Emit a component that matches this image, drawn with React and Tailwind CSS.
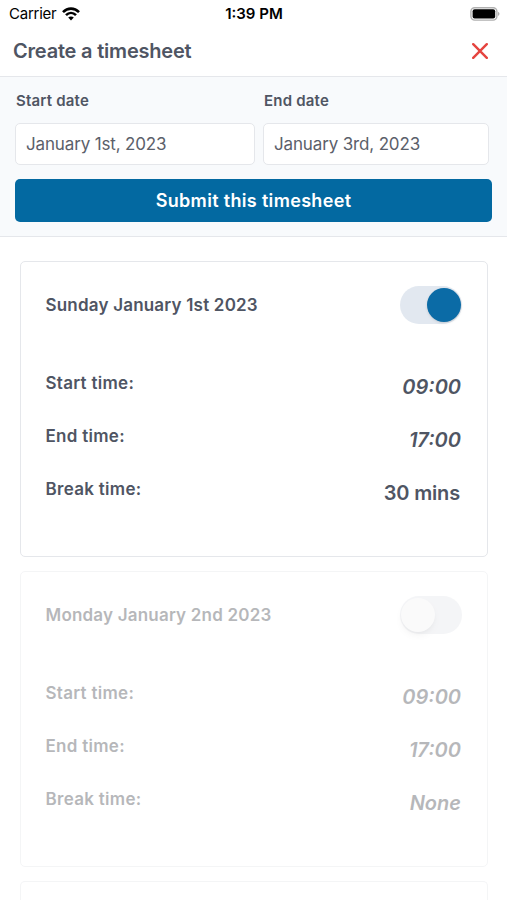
import { clsx } from 'clsx';

const days = [
  { title: 'Sunday January 1st 2023', start: '09:00', end: '17:00', breakTime: '30 mins', enabled: true },
  { title: 'Monday January 2nd 2023', start: '09:00', end: '17:00', breakTime: 'None', enabled: false },
];

function WifiIcon() {
  return (
    <svg className="mb-px ml-[6px] h-[14px] w-[18px]" viewBox="0 0 18 14" fill="none" stroke="#000" strokeWidth="2.6">
      <path d="M1 5.1C5.6 0.4 12.4 0.4 17 5.1" />
      <path d="M4 8.2C6.9 5.3 11.1 5.3 14 8.2" />
      <path d="M9 13.4L6.2 10.5C7.8 9 10.2 9 11.8 10.5Z" fill="#000" stroke="none" />
    </svg>
  );
}

function BatteryIcon() {
  return (
    <svg className="mb-px h-[14px] w-[30px]" viewBox="0 0 30 14">
      <rect x="0.9" y="0.7" width="26" height="12.4" rx="3.8" fill="none" stroke="#b0b0b0" strokeWidth="1.4" />
      <rect x="2.6" y="2.3" width="22.6" height="9.2" rx="2" fill="#000" />
      <path d="M28 4.8C30 5.6 30 8.2 28 9Z" fill="#b0b0b0" />
    </svg>
  );
}

function StatusBar() {
  return (
    <div className="grid h-7 grid-cols-3 items-center pr-[7px] pl-[9px] text-[15px] text-black">
      <div className="flex items-center">
        <span className="tracking-[-0.25px]">Carrier</span>
        <WifiIcon />
      </div>
      <span className="pr-px text-center font-semibold">1:39 PM</span>
      <div className="flex justify-end">
        <BatteryIcon />
      </div>
    </div>
  );
}

function DateField({ label, value, className }) {
  return (
    <div className={className}>
      <label className="block pl-px text-[15px] leading-5 font-semibold tracking-[0.2px]">{label}</label>
      <div className="mt-3 flex h-[42px] items-center rounded-[5px] border border-gray-200 bg-white px-2.5 pt-0.5 text-[17px] tracking-[-0.15px] text-[#5b606a]">
        {value}
      </div>
    </div>
  );
}

function Toggle({ enabled }) {
  return (
    <div
      className={clsx(
        '-mr-px flex h-[38px] w-[62px] items-center rounded-full',
        enabled ? 'justify-end bg-[#e2e8f0] pr-px' : 'bg-[#e5e7ec] pl-px'
      )}
    >
      <div
        className={clsx(
          'size-[34px] rounded-full',
          enabled ? 'bg-[#0b6ba6] shadow-sm' : 'bg-[#f4f4f5] shadow-md'
        )}
      />
    </div>
  );
}

function TimeRow({ label, value, italic = true }) {
  return (
    <div className="flex h-[53px] items-start justify-between">
      <span className="text-[17px] leading-6 tracking-[0.29px]">{label}</span>
      <span className={clsx('mt-1 text-xl leading-6', italic ? 'italic' : 'pr-px tracking-[-0.15px]')}>{value}</span>
    </div>
  );
}

function DayCard({ day }) {
  return (
    <div
      className={clsx(
        'h-[296px] shrink-0 rounded-[5px] border border-gray-200 bg-white pr-[26px] pl-6 font-semibold',
        !day.enabled && 'text-[#4b4e55] opacity-40'
      )}
    >
      <div className="mt-6 flex h-[38px] items-center justify-between">
        <h2 className="pt-px pl-[0.5px] text-[17px] tracking-[0.2px]">{day.title}</h2>
        <Toggle enabled={day.enabled} />
      </div>
      <div className="mt-[47px] pl-[0.5px]">
        <TimeRow label="Start time:" value={day.start} />
        <TimeRow label="End time:" value={day.end} />
        <TimeRow label="Break time:" value={day.breakTime} italic={!day.enabled} />
      </div>
    </div>
  );
}

export default function App() {
  return (
    <div className="flex h-[900px] w-[507px] flex-col overflow-hidden bg-white font-['Inter',sans-serif] text-[#4f5563]">
      <StatusBar />
      <header className="flex h-[49px] shrink-0 items-center justify-between border-b border-gray-200 pr-[19px] pb-0.5 pl-[13px]">
        <h1 className="text-xl font-semibold tracking-[-0.2px]">Create a timesheet</h1>
        <svg className="size-4" viewBox="0 0 16 16" stroke="#e5443f" strokeWidth="2.4" strokeLinecap="round">
          <path d="M1.2 1.2L14.8 14.8M14.8 1.2L1.2 14.8" />
        </svg>
      </header>

      <section className="h-40 shrink-0 border-b border-gray-200 bg-[#f8fafc] px-[15px] pt-[14px]">
        <div className="flex gap-2">
          <DateField label="Start date" value="January 1st, 2023" className="w-60" />
          <DateField label="End date" value="January 3rd, 2023" className="w-[226px]" />
        </div>
        <button className="mt-[14px] h-[43px] w-[477px] rounded-[5px] bg-[#0369a1] text-lg font-semibold tracking-[0.33px] text-white">
          Submit this timesheet
        </button>
      </section>

      <main className="flex min-h-0 flex-1 flex-col gap-[14px] overflow-hidden pt-6 pr-[19px] pl-5">
        {days.map((day) => (
          <DayCard key={day.title} day={day} />
        ))}
        {/* Top edge of the next day */}
        <div className="flex-1 rounded-t-[5px] border border-b-0 border-gray-200 opacity-40" />
      </main>
    </div>
  );
}
